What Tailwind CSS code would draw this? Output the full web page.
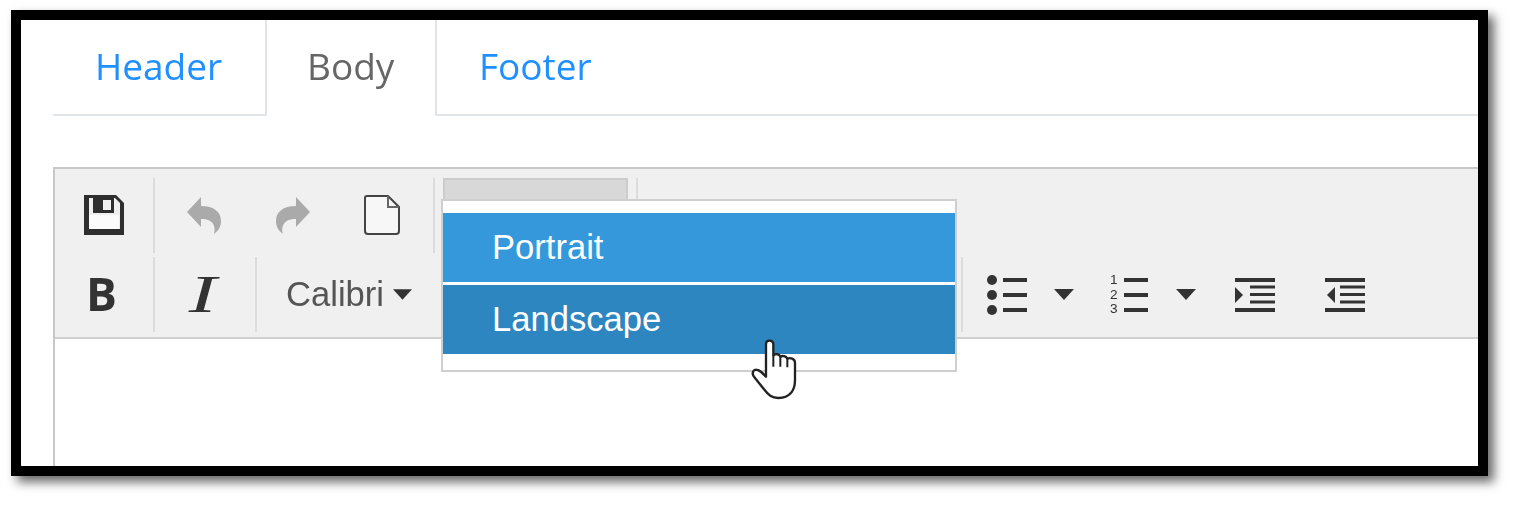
<!DOCTYPE html>
<html lang="en">
<head>
  <meta charset="UTF-8" />
  <title>Editor</title>
  <script src="https://cdn.jsdelivr.net/npm/@tailwindcss/browser@4"></script>
</head>
<body class="bg-white h-[506px] overflow-hidden pt-[10px] pl-[11px] font-['Liberation_Sans',sans-serif]">

  <!-- Framed screenshot -->
  <div class="relative w-[1477px] h-[466px] border-[10px] border-black bg-white overflow-hidden shadow-[6px_6px_10px_rgba(0,0,0,0.6)]">
    <div class="pl-[32px] h-full blur-[0.6px]">

      <!-- Tabs -->
      <div class="flex h-[96px] text-[37px] font-['Open_Sans',sans-serif]">
        <a class="w-[212px] pl-[42px] pt-[18px] text-[#1e90ff] border-b-2 border-[#e2e5e8]">Header</a>
        <a class="w-[172px] pl-[40px] pt-[18px] text-[#666666] border-x-2 border-[#e2e5e8]">Body</a>
        <a class="flex-1 pl-[42px] pt-[18px] text-[#1e90ff] border-b-2 border-[#e2e5e8]">Footer</a>
      </div>

      <!-- Editor -->
      <div class="mt-[51px] h-[320px] border-t-2 border-l-2 border-[#c8c8c8]">
        <div class="h-[170px] bg-[#f0f0f0] border-b-2 border-[#d0d0d0] pt-[9px] flex flex-col gap-[4px]">

          <!-- Row 1 -->
          <div class="flex h-[75px]">
            <div class="w-[98px] flex items-center justify-center">
              <svg width="40" height="40" viewBox="0 0 40 40" class="-mt-[2px] ml-[-1px]">
                <path d="M0 0H32L40 8V40H0Z" fill="#2e2e2e" />
                <path d="M5 3H31L36 8V34H5Z" fill="#eeeeee" />
                <path d="M9 3H30V18H9Z" fill="#2e2e2e" />
                <path d="M19 5H27V15H19Z" fill="#f0f0f0" />
                <path d="M5 20H35V34H5Z" fill="#fbfbfb" />
              </svg>
            </div>
            <div class="w-[2px] bg-[#dcdcdc]"></div>
            <div class="w-[278px] pl-[4px] flex items-center">
              <div class="w-[89px] flex justify-center">
                <svg width="34" height="37" viewBox="0 0 34 37" class="-mt-[1px]"><path d="M0 15L14 0V9C27 9 34 15 34 24C34 30 31 34 27 37C29 30 27 22 14 22V30Z" fill="#aaaaaa" /></svg>
              </div>
              <div class="w-[89px] flex justify-center">
                <svg width="34" height="37" viewBox="0 0 34 37" class="-mt-[1px]"><path d="M34 15L20 0V9C7 9 0 15 0 24C0 30 3 34 7 37C5 30 7 22 20 22V30Z" fill="#aaaaaa" /></svg>
              </div>
              <div class="w-[89px] flex justify-center">
                <svg width="36" height="40" viewBox="0 0 36 40" class="-mt-[2px]">
                  <path d="M3 1H24L35 12V36C35 38 34 39 32 39H4C2 39 1 38 1 36V3C1 2 2 1 3 1Z" fill="#f7f7f7" stroke="#444" stroke-width="2" />
                  <path d="M24 1V12H35" fill="none" stroke="#666" stroke-width="2" />
                </svg>
              </div>
            </div>
            <div class="w-[2px] bg-[#dcdcdc]"></div>
            <div class="ml-[8px] w-[185px] h-[30px] bg-[#d8d8d8] border-2 border-[#cccccc]"></div>
            <div class="ml-[8px] w-[2px] bg-[#dcdcdc]"></div>
          </div>

          <!-- Row 2 -->
          <div class="flex h-[75px] items-stretch">
            <div class="w-[98px] pr-[5px] pb-[4px] flex items-center justify-center text-[#333333] text-[46px] font-bold font-['Open_Sans',sans-serif] leading-none">
              <span class="inline-block">B</span>
            </div>
            <div class="w-[2px] bg-[#dcdcdc]"></div>
            <div class="w-[100px] pr-[4px] flex items-center justify-center text-[#333333] text-[52px] italic font-['Liberation_Serif',serif] leading-none">
              <span class="inline-block scale-x-[1.6]">I</span>
            </div>
            <div class="w-[2px] bg-[#dcdcdc]"></div>
            <div class="w-[155px] pl-[29px] flex items-center text-[34.6px] text-[#555555]">
              <span>Calibri</span>
              <svg width="20" height="11" viewBox="0 0 20 11" class="ml-[9px]"><path d="M0 0H20L10 11Z" fill="#333" /></svg>
            </div>
            <div class="w-[549px]"></div>
            <div class="w-[2px] bg-[#dcdcdc]"></div>

            <div class="flex items-center pl-[24px]">
              <svg width="40" height="42" viewBox="0 0 40 42" fill="#333">
                <circle cx="5" cy="6" r="5" /><circle cx="5" cy="21" r="5" /><circle cx="5" cy="36" r="5" />
                <path d="M16 4H40V8H16ZM16 19H40V23H16ZM16 34H40V38H16Z" />
              </svg>
              <svg width="20" height="11" viewBox="0 0 20 11" class="ml-[27px]"><path d="M0 0H20L10 11Z" fill="#333" /></svg>
              <svg width="38" height="46" viewBox="0 -2 38 46" fill="#333" class="ml-[36px]">
                <text transform="translate(0,10) scale(1.3,1.2)" font-size="10.500" font-family="Liberation Sans">1</text>
                <text transform="translate(0,24.500) scale(1.3,1.2)" font-size="10.500" font-family="Liberation Sans">2</text>
                <text transform="translate(0,39) scale(1.3,1.2)" font-size="10.500" font-family="Liberation Sans">3</text>
                <path d="M14 4H38V8H14ZM14 19H38V23H14ZM14 34H38V38H14Z" />
              </svg>
              <svg width="20" height="11" viewBox="0 0 20 11" class="ml-[28px]"><path d="M0 0H20L10 11Z" fill="#333" /></svg>
              <svg width="40" height="34" viewBox="0 0 40 34" fill="#333" class="ml-[39px]">
                <path d="M0 0H40V4H0ZM15 7.500H40V10.500H15ZM15 15H40V18H15ZM15 22.500H40V25.500H15ZM0 30H40V34H0Z" />
                <path d="M0 9L8 17L0 25Z" />
              </svg>
              <svg width="40" height="34" viewBox="0 0 40 34" fill="#333" class="ml-[50px]">
                <path d="M0 0H40V4H0ZM15 7.500H40V10.500H15ZM15 15H40V18H15ZM15 22.500H40V25.500H15ZM0 30H40V34H0Z" />
                <path d="M10 9L2 17L10 25Z" />
              </svg>
            </div>
          </div>
        </div>
      </div>

      <!-- Open dropdown over the toolbar -->
      <div class="absolute left-[420px] top-[179px] w-[516px] h-[173px] bg-white border-2 border-[#cfcfcf] pt-[12px] flex flex-col gap-[3px] text-[34.6px] text-white">
        <div class="h-[69px] bg-[#3498db] pl-[49px] flex items-center">Portrait</div>
        <div class="h-[69px] bg-[#2e86c1] pl-[49px] flex items-center">Landscape</div>
      </div>

      <!-- Hand cursor -->
      <svg width="70" height="75" viewBox="0 0 210 225" class="absolute left-[719px] top-[310px]">
        <path d="M78 110V42C78 35 82 32 88 32C95 32 100 36 100 43V76C108 70 118 72 121 80C128 76 138 78 142 86C150 82 165 86 165 98V150C165 175 155 203 115 204C95 204 85 195 72 178L42 140C34 130 40 116 52 120C62 122 72 134 78 140Z" fill="#fff" stroke="#222" stroke-width="7" stroke-linejoin="round" />
        <path d="M100 76V110M121 80V110M142 86V112" fill="none" stroke="#222" stroke-width="6" />
      </svg>
    </div>
  </div>
</body>
</html>
